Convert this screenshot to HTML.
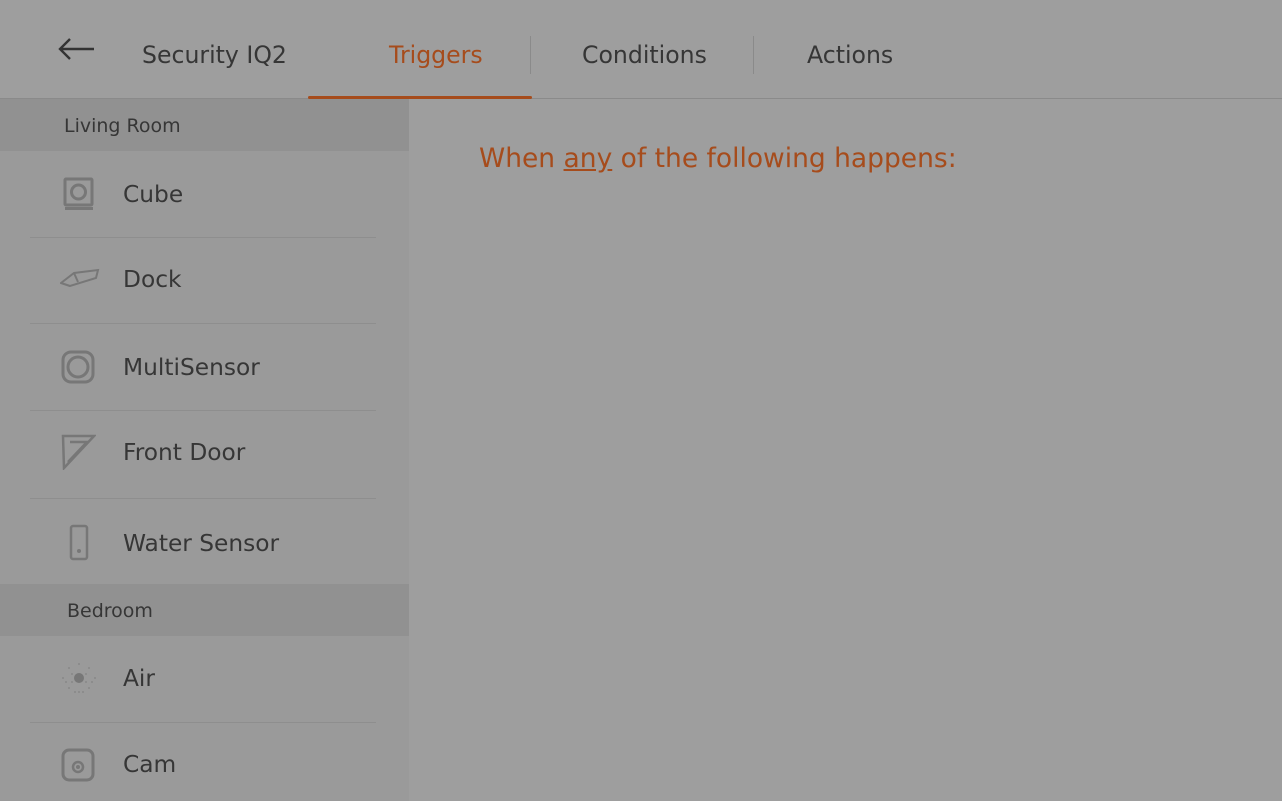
<!DOCTYPE html>
<html><head><style>
*{margin:0;padding:0;box-sizing:border-box}
body{width:1282px;height:801px;background:#9e9e9e;font-family:"DejaVu Sans","Liberation Sans",sans-serif;color:#363636;position:relative;overflow:hidden}
.hdr{position:absolute;left:0;top:0;width:1282px;height:99px;border-bottom:1px solid #8a8a8a}
.t{position:absolute;font-size:23.6px;top:41px}
.sep{position:absolute;top:36px;width:1px;height:38px;background:#8a8a8a}
.side{position:absolute;left:0;top:99px;width:409px;height:702px;background:#9a9a9a}
.sh{position:absolute;left:0;width:409px;height:52px;background:#919191;font-size:19px;line-height:54px}
.it{position:absolute;left:123px;font-size:23.3px;line-height:28px}
.dv{position:absolute;left:30px;width:346px;height:1px;background:#8e8e8e}
.ic{position:absolute;left:60px}
</style></head><body>
<div class="hdr">
<svg style="position:absolute;left:58px;top:38px" width="38" height="22"><path d="M2 11H36M12 1L2 11L12 21" stroke="#333" stroke-width="2.4" fill="none"/></svg>
<div class="t" style="left:142px">Security IQ2</div>
<div class="t" style="left:389px;color:#a64c1c">Triggers</div>
<div class="sep" style="left:530px"></div>
<div class="t" style="left:582px">Conditions</div>
<div class="sep" style="left:753px"></div>
<div class="t" style="left:807px">Actions</div>
<div style="position:absolute;left:308px;top:96px;width:224px;height:3px;background:#a64c1c;border-radius:2px"></div>
</div>
<div class="side">
<div class="sh" style="top:0;padding-left:64px">Living Room</div>
<svg class="ic" style="top:78px" width="36" height="36"><rect x="5" y="2" width="27" height="26" rx="1" fill="none" stroke="#777" stroke-width="3"/><circle cx="18.5" cy="15" r="7" fill="none" stroke="#777" stroke-width="3"/><rect x="5" y="30" width="28" height="3" fill="#777"/></svg>
<div class="it" style="top:82px">Cube</div>
<div class="dv" style="top:138px"></div>
<svg class="ic" style="top:168px" width="40" height="24"><path d="M1 16L14 6L38 3L36 11L10 19Z M14 6L18 15 M1 16L10 19" fill="none" stroke="#777" stroke-width="2"/></svg>
<div class="it" style="top:167px">Dock</div>
<div class="dv" style="top:224px"></div>
<svg class="ic" style="top:250px" width="36" height="36"><rect x="3" y="3" width="30" height="30" rx="8" fill="none" stroke="#777" stroke-width="3"/><circle cx="18" cy="18" r="10" fill="none" stroke="#777" stroke-width="3"/></svg>
<div class="it" style="top:255px">MultiSensor</div>
<div class="dv" style="top:311px"></div>
<svg class="ic" style="top:335px" width="36" height="36"><path d="M3 2H34L4 34Z M10 8H27L8 28" fill="none" stroke="#777" stroke-width="2.5"/></svg>
<div class="it" style="top:340px">Front Door</div>
<div class="dv" style="top:399px"></div>
<svg class="ic" style="top:425px" width="36" height="38"><rect x="11" y="2" width="16" height="33" rx="2" fill="none" stroke="#777" stroke-width="2.5"/><circle cx="19" cy="27" r="2" fill="#777"/></svg>
<div class="it" style="top:431px">Water Sensor</div>
<div class="sh" style="top:485px;padding-left:67px">Bedroom</div>
<svg class="ic" style="top:562px" width="38" height="36"><circle cx="19" cy="17" r="5" fill="#777"/><g fill="#888"><circle cx="19" cy="3" r="1"/><circle cx="19" cy="31" r="1"/><circle cx="3" cy="17" r="1"/><circle cx="35" cy="17" r="1"/><circle cx="9" cy="7" r="1"/><circle cx="29" cy="7" r="1"/><circle cx="9" cy="27" r="1"/><circle cx="29" cy="27" r="1"/><circle cx="12" cy="13" r="1"/><circle cx="26" cy="13" r="1"/><circle cx="12" cy="21" r="1"/><circle cx="26" cy="21" r="1"/><circle cx="15" cy="31" r="1"/><circle cx="23" cy="31" r="1"/><circle cx="6" cy="21" r="1"/><circle cx="32" cy="21" r="1"/></g></svg>
<div class="it" style="top:566px">Air</div>
<div class="dv" style="top:623px"></div>
<svg class="ic" style="top:648px" width="38" height="38"><rect x="3" y="3" width="30" height="30" rx="6" fill="none" stroke="#777" stroke-width="3"/><circle cx="18" cy="20" r="5" fill="none" stroke="#777" stroke-width="2.5"/><circle cx="18" cy="20" r="2" fill="#777"/></svg>
<div class="it" style="top:652px">Cam</div>
</div>
<div style="position:absolute;left:479px;top:143px;font-size:26.5px;color:#a64c1c">When <span style="text-decoration:underline">any</span> of the following happens:</div>
</body></html>
